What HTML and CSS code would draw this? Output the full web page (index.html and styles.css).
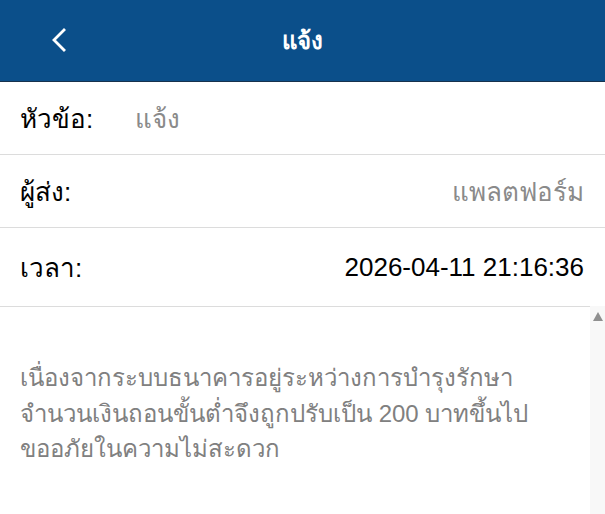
FILE: index.html
```html
<!DOCTYPE html>
<html lang="th">
<head>
<meta charset="utf-8">
<title>แจ้ง</title>
<link rel="stylesheet" href="styles.css">
</head>
<body>
<div class="page">
  <header class="topbar">
    <button class="back" aria-label="back">
      <svg width="20" height="26" viewBox="0 0 20 26"><polyline points="13,2 3,12 13,22" fill="none" stroke="#fff" stroke-width="2.8" stroke-linecap="square"/></svg>
    </button>
    <h1 class="title">แจ้ง</h1>
  </header>
  <div class="row">
    <span class="label">หัวข้อ:</span>
    <span class="value value-left">แจ้ง</span>
  </div>
  <div class="row">
    <span class="label">ผู้ส่ง:</span>
    <span class="value value-right">แพลตฟอร์ม</span>
  </div>
  <div class="row row-last">
    <span class="label">เวลา:</span>
    <span class="value value-right value-dark">2026-04-11 21:16:36</span>
  </div>
  <div class="body">
    <div class="content">
      <p class="message">เนื่องจากระบบธนาคารอยู่ระหว่างการบำรุงรักษา<br>จำนวนเงินถอนขั้นต่ำจึงถูกปรับเป็น 200 บาทขึ้นไป<br>ขออภัยในความไม่สะดวก</p>
    </div>
    <div class="scrollbar"><span class="arrow-up"></span></div>
  </div>
</div>
</body>
</html>
```
FILE: styles.css
```css
html, body {
  margin: 0;
  padding: 0;
  background: #fff;
}
body {
  font-family: "Liberation Sans", Arial, sans-serif;
  width: 605px;
  height: 514px;
  overflow: hidden;
}
.page {
  display: flex;
  flex-direction: column;
  height: 514px;
}
.topbar {
  position: relative;
  height: 81px;
  flex: none;
  background: #0b4f8a;
  border-bottom: 1px solid #17324d;
  display: flex;
  align-items: center;
  justify-content: center;
}
.back {
  position: absolute;
  left: 51px;
  top: 28px;
  padding: 0;
  margin: 0;
  border: 0;
  background: none;
  width: 20px;
  height: 26px;
  display: block;
}
.back svg { display: block; }
.title {
  margin: 0;
  color: #fff;
  font-size: 24px;
  font-weight: bold;
  line-height: 1;
}
.row {
  flex: none;
  height: 72px;
  display: flex;
  align-items: center;
  padding: 0 21px 0 20px;
  border-bottom: 1px solid #dcdcdc;
  font-size: 26px;
}
.row-last {
  height: 78px;
  border-bottom: none;
}
.label {
  color: #000;
}
.value {
  color: #8a8a8a;
}
.value-left {
  margin-left: 42px;
}
.value-right {
  margin-left: auto;
}
.value-dark {
  color: #000;
}
.body {
  flex: 1;
  display: flex;
  min-height: 0;
}
.content {
  flex: 1;
  border-top: 1px solid #dcdcdc;
  padding: 53px 0 0 20px;
}
.message {
  margin: 0;
  color: #808080;
  font-size: 24px;
  line-height: 35.5px;
}
.scrollbar {
  flex: none;
  width: 15px;
  background: #f8f8f8;
  padding-top: 6px;
  display: flex;
  justify-content: center;
  align-items: flex-start;
}
.arrow-up {
  width: 0;
  height: 0;
  border-left: 5px solid transparent;
  border-right: 5px solid transparent;
  border-bottom: 9px solid #8f8f8f;
}
```
